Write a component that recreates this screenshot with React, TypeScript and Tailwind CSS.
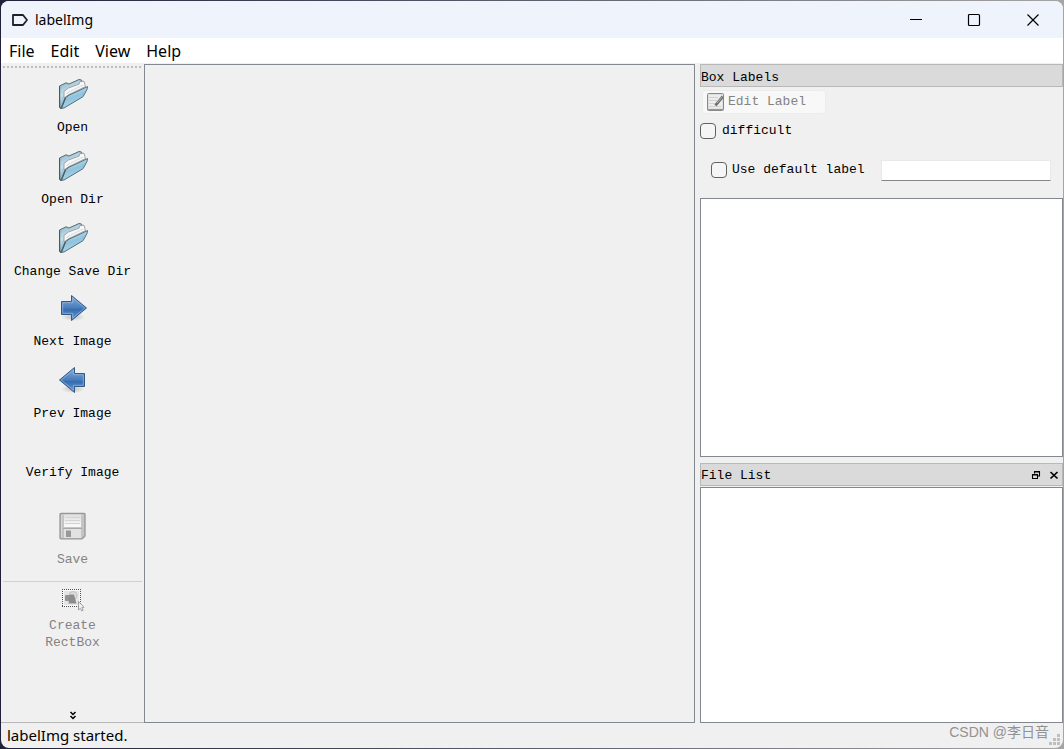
import type { ReactNode } from 'react';

function FolderIcon() {
  return (
    <svg viewBox="0 0 32 32" className="h-8 w-8" aria-hidden="true">
      <defs>
        <linearGradient id="folderBack" x1="0" y1="0" x2="0.4" y2="1">
          <stop offset="0" stopColor="#86aabc" />
          <stop offset="0.5" stopColor="#c2e0ec" />
          <stop offset="1" stopColor="#6b96ad" />
        </linearGradient>
        <linearGradient id="folderFront" x1="0.2" y1="0" x2="0.6" y2="1">
          <stop offset="0" stopColor="#dcedf4" />
          <stop offset="0.5" stopColor="#8fc3dc" />
          <stop offset="1" stopColor="#b4d9e9" />
        </linearGradient>
      </defs>
      <path d="M2.5 8 L9 4.8 L12 6 L22 1.5 L24.5 2 L25 5 L8 20 L4 30.5 L2.5 29.5 Z" fill="url(#folderBack)" stroke="#5b6a72" strokeLinejoin="round" />
      <path d="M7 20 V13.5 L11.5 10 L22 6.2 L23 3.6 L27 3.2 L28.5 8.5 L12 16.5 Z" fill="#f8f8f8" stroke="#8b9194" strokeWidth="0.8" strokeLinejoin="round" />
      <path d="M9 15.5 L26 7" stroke="#dedfe0" strokeWidth="1.2" />
      <path d="M4 30.3 L8.5 20 L12 17.2 L26 10.8 L30.6 8.5 L30 11.5 L26 18.7 L7 30 Z" fill="url(#folderFront)" stroke="#567080" strokeLinejoin="round" />
      <path d="M2.7 8.5 V29.3 L4.5 30.5 L8.5 20" fill="none" stroke="#454c50" strokeWidth="0.8" />
    </svg>
  );
}

function ArrowIcon({ back = false }: { back?: boolean }) {
  return (
    <svg viewBox="0 0 32 32" className={back ? 'h-8 w-8 -scale-x-100' : 'h-8 w-8'} aria-hidden="true">
      <defs>
        <linearGradient id="arrowFill" x1="0" y1="0" x2="0" y2="1">
          <stop offset="0" stopColor="#88aedb" />
          <stop offset="0.5" stopColor="#477dbd" />
          <stop offset="0.56" stopColor="#386caf" />
          <stop offset="1" stopColor="#679bd3" />
        </linearGradient>
        <radialGradient id="arrowShade">
          <stop offset="0" stopColor="#777" stopOpacity="0.4" />
          <stop offset="1" stopColor="#777" stopOpacity="0" />
        </radialGradient>
      </defs>
      <ellipse cx="16" cy="25" rx="12" ry="4" fill="url(#arrowShade)" />
      <path d="M4.5 9.5 H14.5 V3.5 L29.5 16 L14.5 28.5 V22.5 H4.5 Z" fill="url(#arrowFill)" stroke="#315986" strokeWidth="1" strokeLinejoin="round" />
      <path d="M5.7 21.3 V10.7 H15.7 V6 L27.8 16 L15.7 26 V21.3 Z" fill="none" stroke="#96b9e0" strokeWidth="0.7" />
    </svg>
  );
}

function SaveIcon() {
  return (
    <svg viewBox="0 0 32 32" className="h-8 w-8" aria-hidden="true">
      <defs>
        <linearGradient id="diskLabel" x1="0" y1="0" x2="0" y2="1">
          <stop offset="0" stopColor="#dfdfdf" />
          <stop offset="1" stopColor="#fafafa" />
        </linearGradient>
      </defs>
      <path d="M4 3.5 H27 Q28 3.5 28 4.5 V26 L25 28.8 H4 Q3 28.8 3 27.8 V4.5 Q3 3.5 4 3.5 Z" fill="#c4c4c4" stroke="#979797" strokeWidth="1.3" />
      <path d="M4.5 27.5 V5 H26.5" fill="none" stroke="#d5d5d5" />
      <rect x="7" y="4.5" width="17" height="12.5" fill="url(#diskLabel)" />
      <path d="M8 7.5 H23 M8 10.5 H23 M8 13.5 H23" stroke="#d3d3d3" />
      <rect x="7" y="19" width="17" height="9" fill="#e2e2e2" />
      <path d="M6 18.5 H25" stroke="#a8a8a8" />
      <rect x="9" y="20.5" width="5" height="6.5" fill="#999" />
    </svg>
  );
}

function RectBoxIcon() {
  return (
    <svg viewBox="0 0 24 24" className="h-6 w-6" aria-hidden="true">
      <rect x="1.5" y="1.5" width="18" height="17" fill="#f8f8f8" />
      <path d="M1 1.5 H20 M1 18.5 H20 M1.5 1 V19 M19.5 1 V19" stroke="#505050" strokeDasharray="1 1" />
      <rect x="3" y="3" width="15" height="14" fill="#e5e5e5" />
      <circle cx="12" cy="7.5" r="4" fill="#dedede" stroke="#c2c2c2" />
      <rect x="4" y="7" width="8" height="6" rx="1" fill="#939393" />
      <path d="M9 6.5 H13 L15.5 15.5 H7.5 Z" fill="#8c8c8c" />
      <path d="M17.5 13.5 V22 L19.3 20.4 L20.8 23 L22.2 22.2 L20.8 19.7 L23 19.2 Z" fill="#f2f2f2" stroke="#8b8b8b" strokeWidth="0.8" />
    </svg>
  );
}

function EditIcon() {
  return (
    <svg viewBox="0 0 20 20" className="h-5 w-5" aria-hidden="true">
      <rect x="1.5" y="1.5" width="16" height="17" rx="1" fill="#dedede" stroke="#888" />
      <rect x="3" y="3" width="13" height="13" fill="#ededed" />
      <path d="M3 5.5 H12 M3 8.5 H11 M3 11.5 H10 M3 14.5 H15" stroke="#d0d0d0" />
      <path d="M2 17.5 H17" stroke="#999" />
      <path d="M16.8 4.5 L11 11.5 L9.5 13.5" fill="none" stroke="#6f6f6f" strokeWidth="2.8" />
      <path d="M16.5 4.5 L11 11" stroke="#b5b5b5" />
    </svg>
  );
}

function Tool({ label, icon, className, disabled }: { label: string; icon?: ReactNode; className: string; disabled?: boolean }) {
  return (
    <button type="button" disabled={disabled} className={`flex w-full flex-col items-center gap-2.5 disabled:text-[#838383] ${className}`}>
      {icon}
      <span className="leading-4">{label}</span>
    </button>
  );
}

const menus = ['File', 'Edit', 'View', 'Help'];

const checkbox = 'h-4 w-4 shrink-0 appearance-none rounded border border-[#626262] bg-[#f5f5f5] checked:bg-[#0067c0]';

export default function App() {
  return (
    <div className="flex min-h-screen flex-col bg-linear-to-r from-[#20203a] to-[#a5a5a5] p-px font-['Liberation_Mono',monospace] text-[13px] text-black">
      <div className="flex grow flex-col overflow-hidden rounded-lg bg-[#f0f0f0]">
        <header className="flex h-[37px] shrink-0 items-center bg-[#eff3fb] pl-2.5 font-['Noto_Sans',sans-serif]">
          <svg viewBox="0 0 18 14" className="mr-1.5 h-3.5 w-[18px]" aria-hidden="true">
            <path d="M2 2 H12 L16 7 L12 12 H2 Z" fill="none" stroke="#202026" strokeWidth="1.8" strokeLinejoin="round" />
          </svg>
          <h1 className="grow text-sm">labelImg</h1>
          <button type="button" aria-label="Minimize" className="flex h-full w-[58px] items-center justify-center">
            <svg viewBox="0 0 14 14" className="h-3.5 w-3.5"><path d="M1 6.5 H13" stroke="#000" /></svg>
          </button>
          <button type="button" aria-label="Maximize" className="flex h-full w-[58px] items-center justify-center">
            <svg viewBox="0 0 14 14" className="h-3.5 w-3.5"><rect x="1.5" y="1.5" width="11" height="11" rx="1" fill="none" stroke="#000" strokeWidth="1.2" /></svg>
          </button>
          <button type="button" aria-label="Close" className="flex h-full w-[60px] items-center justify-center">
            <svg viewBox="0 0 14 14" className="h-3.5 w-3.5"><path d="M1.5 1.5 L12.5 12.5 M12.5 1.5 L1.5 12.5" stroke="#000" strokeWidth="1.2" /></svg>
          </button>
        </header>

        <nav className="flex h-[25px] shrink-0 items-center gap-4 bg-white pl-2 font-['Noto_Sans',sans-serif] text-base">
          {menus.map((menu) => (
            <button key={menu} type="button">{menu}</button>
          ))}
        </nav>

        <main className="flex grow pt-px">
          <div role="toolbar" className="flex w-[143px] shrink-0 flex-col border-b border-[#b8b8b8] px-0.5 pt-0.5">
            <div className="h-0.5 bg-[repeating-linear-gradient(to_right,#bdbdbd_0px,#bdbdbd_2px,transparent_2px,transparent_4px)]" />
            <Tool label="Open" icon={<FolderIcon />} className="mt-2.5" />
            <Tool label="Open Dir" icon={<FolderIcon />} className="mt-3.5" />
            <Tool label="Change Save Dir" icon={<FolderIcon />} className="mt-3.5" />
            <Tool label="Next Image" icon={<ArrowIcon />} className="mt-3" />
            <Tool label="Prev Image" icon={<ArrowIcon back />} className="mt-3.5" />
            <Tool label="Verify Image" className="mt-[43px]" />
            <Tool label="Save" icon={<SaveIcon />} disabled className="mt-[29px]" />
            <hr className="mt-[13px] border-[#d0d0d0]" />
            <button type="button" disabled className="mt-1.5 flex flex-col items-center gap-[5px] text-[#838383]">
              <RectBoxIcon />
              <span className="w-20 leading-[17px]">Create RectBox</span>
            </button>
            <button type="button" aria-label="More tools" className="mt-auto flex w-full justify-center pb-px">
              <svg viewBox="0 0 8 10" className="h-2.5 w-2"><path d="M1.5 1 L4 3.5 L6.5 1 M1.5 5 L4 7.5 L6.5 5" fill="none" stroke="#000" strokeWidth="1.5" /></svg>
            </button>
          </div>

          <section aria-label="Canvas" className="grow border border-[#828790]" />

          <aside className="ml-[5px] flex w-[363px] shrink-0 flex-col">
            <h2 className="h-[23px] border border-[#b8b8b8] bg-[#dadada] pt-[3px] leading-5">Box Labels</h2>
            <button type="button" disabled className="mt-[3px] ml-0.5 flex h-6 w-[124px] items-center gap-0.5 rounded border border-[#ececec] bg-[#f8f8f8] pl-[3px] text-[#838383]">
              <EditIcon />
              Edit Label
            </button>
            <label className="mt-2 flex h-[18px] items-center gap-1.5">
              <input type="checkbox" className={checkbox} />
              difficult
            </label>
            <div className="mt-[19px] flex h-[22px] items-center pr-3 pl-[11px]">
              <label className="flex items-center gap-[5px]">
                <input type="checkbox" className={checkbox} />
                Use default label
              </label>
              <input type="text" aria-label="Default label" className="ml-auto h-[21px] w-[170px] border border-b-[#868686] border-[#e9e9e9] bg-white px-1 outline-none" />
            </div>
            <div role="listbox" aria-label="Box labels" className="mt-[17px] h-[259px] border border-[#828790] bg-white" />
            <div className="mt-1.5 flex h-[23px] items-center border border-[#b8b8b8] bg-[#dadada] pr-[3px]">
              <h2 className="grow pt-0.5">File List</h2>
              <button type="button" aria-label="Float panel" className="mr-2">
                <svg viewBox="0 0 10 10" className="h-2.5 w-2.5"><path d="M3.5 3.5 V1.5 H8.5 V6 H7 M3 2 H9 M1.5 4.5 H6.5 V8.5 H1.5 Z M1 5 H7" fill="none" stroke="#000" strokeWidth="1.1" /></svg>
              </button>
              <button type="button" aria-label="Close panel">
                <svg viewBox="0 0 10 10" className="h-2.5 w-2.5"><path d="M1.5 2 L8.5 8.5 M8.5 2 L1.5 8.5" stroke="#000" strokeWidth="1.7" /></svg>
              </button>
            </div>
            <div role="listbox" aria-label="Files" className="mt-px grow border border-[#828790] bg-white" />
          </aside>
        </main>

        <footer className="relative flex h-[25px] shrink-0 items-center justify-between pr-3.5 pl-1.5 font-['Noto_Sans',sans-serif] text-[15px]">
          <span>labelImg started.</span>
          <span className="pb-2 font-['Liberation_Sans','Noto_Sans_CJK_SC',sans-serif] text-sm text-[#929292]">CSDN @李日音</span>
          <svg viewBox="0 0 12 12" className="absolute right-0.5 bottom-0.5 h-3 w-3" aria-hidden="true">
            <path d="M8 0h3v3h-3z M8 4h3v3h-3z M4 4h3v3h-3z M0 8h3v3h-3z M4 8h3v3h-3z M8 8h3v3h-3z" fill="#bfbfbf" />
          </svg>
        </footer>
      </div>
    </div>
  );
}
